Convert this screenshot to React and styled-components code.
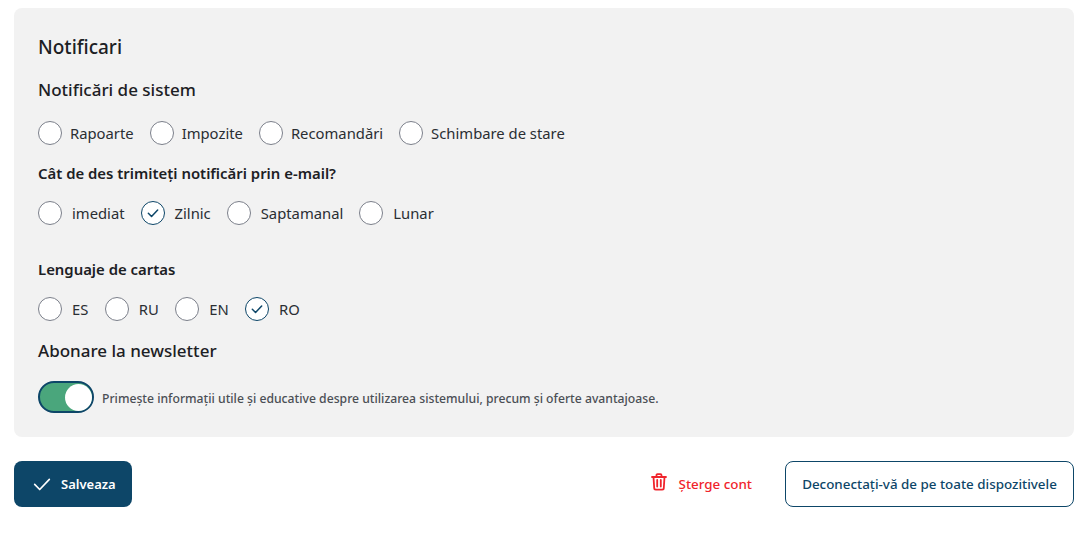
import React from "react";
import styled, { createGlobalStyle } from "styled-components";

const Global = createGlobalStyle`
  html, body { margin: 0; padding: 0; background: #fff; }
  body { font-family: "Noto Sans", "Open Sans", sans-serif; color: #1c2024; }
`;
const Page = styled.div`
  padding: 8px 16px 0 14px;
  display: flex;
  flex-direction: column;
  gap: 24px;
`;
const Panel = styled.section`
  background: #f2f2f2;
  border-radius: 8px;
  height: 429px;
  box-sizing: border-box;
  padding: 26px 24px 0;
  display: flex;
  flex-direction: column;
`;
const Title = styled.h2`
  margin: 0;
  font-size: 19px;
  line-height: 26px;
  font-weight: 500;
`;
const Heading = styled.h3`
  margin: ${(p) => p.$top}px 0 0;
  font-size: 17px;
  line-height: 24px;
  font-weight: 500;
`;
const Question = styled.h4`
  margin: ${(p) => p.$top}px 0 0;
  font-size: 14.9px;
  line-height: 20px;
  font-weight: 600;
`;
const Options = styled.div`
  display: flex;
  align-items: center;
  height: 24px;
  margin-top: ${(p) => p.$top}px;
  gap: ${(p) => p.$gap}px;
`;
const Option = styled.label`
  display: flex;
  align-items: center;
  gap: ${(p) => p.$gap}px;
  font-size: 14.8px;
  line-height: 24px;
  color: #2a2e33;
`;
const Circle = styled.span`
  width: 24px;
  height: 24px;
  box-sizing: border-box;
  border-radius: 50%;
  background: #fff;
  border: 1px solid ${(p) => (p.$on ? "#0d4668" : "#7b7f8a")};
  display: flex;
  align-items: center;
  justify-content: center;
  color: #0d4668;
`;
const ToggleRow = styled.div`
  display: flex;
  align-items: center;
  gap: 8px;
  margin-top: 18px;
`;
const Track = styled.span`
  width: 56px;
  height: 32px;
  box-sizing: border-box;
  border: 2px solid #0d4668;
  border-radius: 16px;
  background: #4aa67c;
  display: flex;
  align-items: center;
  justify-content: flex-end;
`;
const Knob = styled.span`
  width: 27px;
  height: 27px;
  border-radius: 50%;
  background: #fff;
`;
const Hint = styled.span`
  font-size: 12.2px;
  line-height: 18px;
  font-weight: 500;
  color: #4b4f55;
  padding-top: 3px;
`;
const Footer = styled.footer`
  display: flex;
  align-items: center;
  justify-content: space-between;
`;
const Save = styled.button`
  width: 118px;
  height: 46px;
  border: 0;
  border-radius: 8px;
  background: #0d4668;
  color: #fff;
  font: 600 13px "Noto Sans", sans-serif;
  display: flex;
  align-items: center;
  gap: 8px;
  padding: 0 0 0 17px;
`;
const Actions = styled.div`
  display: flex;
  align-items: center;
  gap: 33px;
`;
const Delete = styled.button`
  border: 0;
  background: none;
  padding: 0;
  color: #f0242c;
  font: 500 13.4px "Noto Sans", sans-serif;
  display: flex;
  align-items: center;
  gap: 12px;
`;
const TrashIcon = styled.svg`
  margin-bottom: 4px;
`;
const Outline = styled.button`
  width: 289px;
  height: 46px;
  box-sizing: border-box;
  border: 1px solid #0d4668;
  border-radius: 8px;
  background: #fff;
  color: #0d4668;
  font: 500 13.4px "Noto Sans", sans-serif;
  padding: 0;
`;

const Check = ({ size = 14, w = 2.6 }) => (
  <svg width={size} height={size} viewBox="0 0 24 24" fill="none" stroke="currentColor" strokeWidth={w} strokeLinecap="round" strokeLinejoin="round">
    <path d="M4 12.5l5.5 5.5L20 7" />
  </svg>
);
const Trash = () => (
  <TrashIcon width="16" height="18" viewBox="0 0 16 18" fill="none" stroke="#f0242c" strokeWidth="1.8" strokeLinecap="round" strokeLinejoin="round">
    <path d="M1 4h14M5.5 4V2.2c0-.6.4-1 1-1h3c.6 0 1 .4 1 1V4M2.5 4l.7 11c0 .9.7 1.6 1.6 1.6h6.4c.9 0 1.6-.7 1.6-1.6l.7-11M6.2 7v6.5M9.8 7v6.5" />
  </TrashIcon>
);

const Radio = ({ label, on, gap }) => (
  <Option $gap={gap}>
    <Circle $on={on}>{on && <Check />}</Circle>
    {label}
  </Option>
);

export default function App() {
  return (
    <Page>
      <Global />
      <Panel>
        <Title>Notificari</Title>
        <Heading $top={18}>Notificări de sistem</Heading>
        <Options $top={19} $gap={16}>
          <Radio gap={8} label="Rapoarte" />
          <Radio gap={8} label="Impozite" />
          <Radio gap={8} label="Recomandări" />
          <Radio gap={8} label="Schimbare de stare" />
        </Options>
        <Question $top={18}>Cât de des trimiteți notificări prin e-mail?</Question>
        <Options $top={18} $gap={16}>
          <Radio gap={10} label="imediat" />
          <Radio gap={10} label="Zilnic" on />
          <Radio gap={10} label="Saptamanal" />
          <Radio gap={10} label="Lunar" />
        </Options>
        <Question $top={34}>Lenguaje de cartas</Question>
        <Options $top={18} $gap={16.4}>
          <Radio gap={10} label="ES" />
          <Radio gap={10} label="RU" />
          <Radio gap={10} label="EN" />
          <Radio gap={10} label="RO" on />
        </Options>
        <Heading $top={18}>Abonare la newsletter</Heading>
        <ToggleRow>
          <Track><Knob /></Track>
          <Hint>Primește informații utile și educative despre utilizarea sistemului, precum și oferte avantajoase.</Hint>
        </ToggleRow>
      </Panel>
      <Footer>
        <Save><Check size={22} w={1.8} />Salveaza</Save>
        <Actions>
          <Delete><Trash />Șterge cont</Delete>
          <Outline>Deconectați-vă de pe toate dispozitivele</Outline>
        </Actions>
      </Footer>
    </Page>
  );
}
